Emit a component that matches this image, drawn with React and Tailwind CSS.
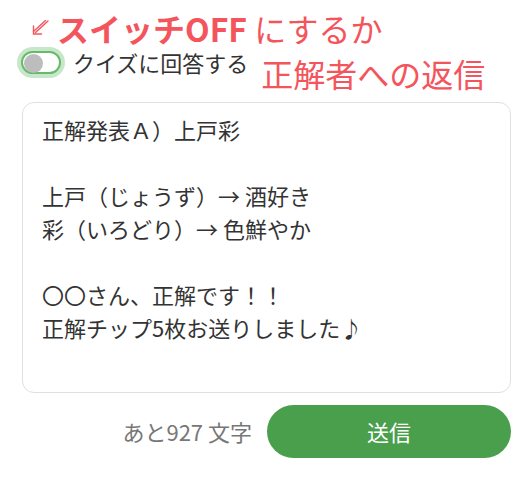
export default function App() {
  return (
    <div className="min-h-screen bg-white pl-[21px] pr-[21px] font-['Noto_Sans_CJK_JP','Noto_Sans',sans-serif]">
      {/* annotation line 1 */}
      <div className="flex items-center pt-[11px] pl-[11px]">
        <svg width="18" height="16" viewBox="0 0 18 16" fill="none" stroke="#f4545c" strokeWidth="1.4" strokeLinecap="round">
          <path d="M16 1 L3.5 12.5" />
          <path d="M13.5 0.5 L1.5 11.5" />
          <path d="M1.5 6 L1.5 14 L9.5 14" />
        </svg>
        <div className="ml-[7px] text-[32px] leading-[34px] text-[#f4545c] whitespace-nowrap">
          <span className="font-bold">スイッチOFF</span> にするか
        </div>
      </div>

      {/* toggle row */}
      <div className="flex items-start mt-[1px]">
        <div className="flex items-center h-[30px] mt-[1px]">
          <div className="relative w-[40px] h-[23px] rounded-full border-2 border-[#66bb6a] bg-white ring-4 ring-[#c8e6c9]">
            <div className="absolute left-[1px] top-[1px] w-[19px] h-[19px] rounded-full bg-[#bdbdbd]" />
          </div>
        </div>
        <div className="ml-[12px] text-[22px] leading-[30px] mt-[1px] text-[#333333] whitespace-nowrap">
          クイズに回答する
        </div>
        <div className="ml-[13px] mt-[9px] text-[32px] leading-[36px] text-[#f4545c] whitespace-nowrap">
          正解者への返信
        </div>
      </div>

      {/* reply box */}
      <textarea
        readOnly
        className="mt-[11px] ml-[1px] block w-[489px] h-[291px] resize-none rounded-[12px] border border-[#e0e0e0] bg-white pl-[19px] pr-[19px] pt-[10px] text-[22px] leading-[33px] text-[#333333] outline-none"
        defaultValue={"正解発表Ａ）上戸彩\n\n上戸（じょうず）→ 酒好き\n彩（いろどり）→ 色鮮やか\n\n〇〇さん、正解です！！\n正解チップ5枚お送りしました♪"}
      />

      {/* footer */}
      <div className="mt-[12px] flex items-center justify-end gap-[15px]">
        <span className="text-[22px] text-[#777777] whitespace-nowrap">あと927 文字</span>
        <button className="w-[244px] h-[53px] rounded-full bg-[#4a9f4c] text-[22px] text-white">
          送信
        </button>
      </div>
    </div>
  );
}
